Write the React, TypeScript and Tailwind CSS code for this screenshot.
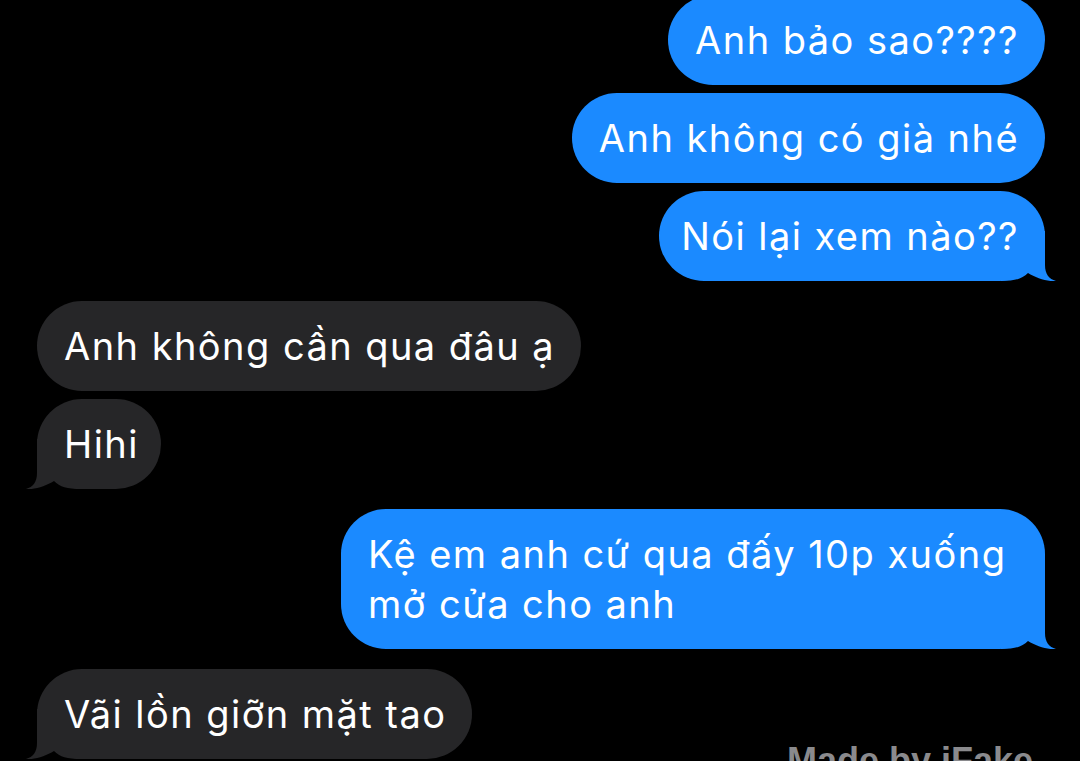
import React from "react";

const BLUE = "#1b8aff";
const GRAY = "#262628";

function TailRight({ color }: { color: string }) {
  return (
    <svg
      className="absolute bottom-0 right-[-16px]"
      width="60"
      height="50"
      viewBox="-44 -50 60 50"
      aria-hidden
    >
      <path
        d="M -44 -50 L 0 -50 L 0 -16 C 0 -7 4 -2 11 0 C 3 1 -9 -3 -17 -8 C -23 -2 -30 0 -44 0 Z"
        fill={color}
      />
    </svg>
  );
}

function TailLeft({ color }: { color: string }) {
  return (
    <svg
      className="absolute bottom-0 left-[-16px]"
      width="60"
      height="50"
      viewBox="-16 -50 60 50"
      aria-hidden
    >
      <path
        d="M 44 -50 L 0 -50 L 0 -16 C 0 -7 -4 -2 -11 0 C -3 1 9 -3 17 -8 C 23 -2 30 0 44 0 Z"
        fill={color}
      />
    </svg>
  );
}

function Me({
  children,
  tail,
  className = "",
}: {
  children: React.ReactNode;
  tail?: boolean;
  className?: string;
}) {
  return (
    <div
      className={`relative self-end mr-[35px] rounded-[45px] bg-[#1b8aff] py-[20px] text-white whitespace-nowrap ${className}`}
    >
      {tail && <TailRight color={BLUE} />}
      <span className="relative">{children}</span>
    </div>
  );
}

function Them({
  children,
  tail,
  className = "",
}: {
  children: React.ReactNode;
  tail?: boolean;
  className?: string;
}) {
  return (
    <div
      className={`relative self-start ml-[37px] rounded-[45px] bg-[#262628] py-[20px] text-white whitespace-nowrap ${className}`}
    >
      {tail && <TailLeft color={GRAY} />}
      <span className="relative">{children}</span>
    </div>
  );
}

export default function App() {
  return (
    <div
      className="relative h-[761px] w-full overflow-hidden bg-black text-[38px] leading-[50px] tracking-[1.45px]"
      style={{ fontFamily: "Inter, 'Noto Sans', sans-serif" }}
    >
      <div className="flex flex-col">
        <Me className="mt-[-5px] pl-[27px] pr-[26px]">Anh bảo sao????</Me>
        <Me className="mt-[8px] pl-[27px] pr-[26px]">Anh không có già nhé</Me>
        <Me className="mt-[8px] pl-[22px] pr-[26px]" tail>
          Nói lại xem nào??
        </Me>
        <Them className="mt-[20px] pl-[27px] pr-[26px]">Anh không cần qua đâu ạ</Them>
        <Them className="mt-[8px] pl-[27px] pr-[22px]" tail>
          Hihi
        </Them>
        <Me className="mt-[20px] w-[704px] rounded-[40px] pl-[27px] pr-[26px]" tail>
          Kệ em anh cứ qua đấy 10p xuống
          <br />
          mở cửa cho anh
        </Me>
        <Them className="mt-[20px] pl-[27px] pr-[26px]" tail>
          Vãi lồn giỡn mặt tao
        </Them>
      </div>
      <div
        className="absolute left-[787px] top-[741px] text-[36px] font-bold leading-[40px] tracking-normal text-[#8a8a8d]"
        style={{ fontFamily: "'Liberation Sans', Arial, sans-serif" }}
      >
        Made by iFake
      </div>
    </div>
  );
}
